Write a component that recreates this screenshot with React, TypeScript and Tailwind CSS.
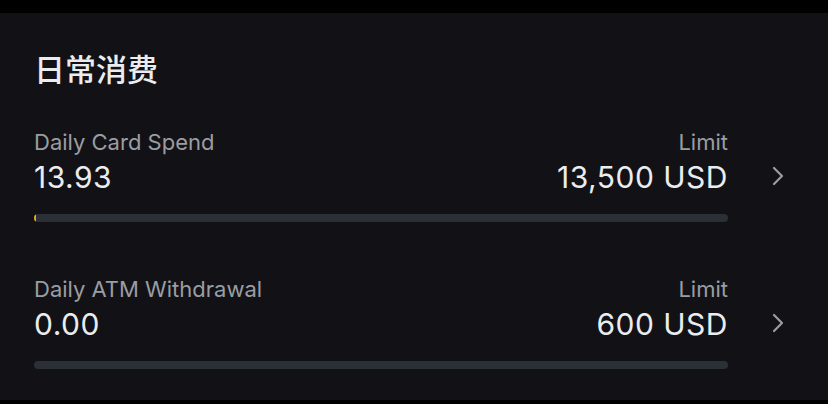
import React from "react";

const LIMITS = [
  { id: 1, label: "Daily Card Spend", used: 13.93, usedText: "13.93", limit: 13500, limitText: "13,500 USD" },
  { id: 2, label: "Daily ATM Withdrawal", used: 0, usedText: "0.00", limit: 600, limitText: "600 USD" },
];

function Chevron() {
  return (
    <svg width="12" height="20" viewBox="0 0 12 20" fill="none" className="text-[#9a9da3]">
      <path d="M2 2l8 8-8 8" stroke="currentColor" strokeWidth="2.2" strokeLinecap="round" strokeLinejoin="round" />
    </svg>
  );
}

export default function App() {
  return (
    <div
      className="w-[828px] h-[404px] bg-black pt-[13px] pb-[4px]"
      style={{ fontFamily: 'Inter, "Noto Sans CJK SC", sans-serif' }}
    >
      <div className="h-full bg-[#121216] pl-[34px] pr-[44px] pt-[39px]">
        {/* Title */}
        <h1 className="text-[31px] leading-[36px] font-medium text-[#eaecef]">日常消费</h1>

        {/* Limit rows */}
        <div className="mt-[41px] flex flex-col gap-[54px]">
          {LIMITS.map((item) => {
            const pct = Math.max((item.used / item.limit) * 100, item.used > 0 ? 0.3 : 0);
            return (
              <div key={item.id} className="flex items-start">
                <div className="flex-1">
                  <div className="flex justify-between text-[22px] leading-[26px] text-[#9a9da3]">
                    <span>{item.label}</span>
                    <span>Limit</span>
                  </div>
                  <div className="mt-[5px] flex justify-between text-[30px] leading-[34px] tracking-[0.5px] text-[#eaecef]">
                    <span>{item.usedText}</span>
                    <span>{item.limitText}</span>
                  </div>
                  <div className="mt-[20px] h-[8px] rounded-full bg-[#2b2f36] overflow-hidden">
                    <div className="h-full bg-[#f0a90b] rounded-full" style={{ width: `${pct}%` }} />
                  </div>
                </div>
                <div className="ml-[44px] mt-[37px]">
                  <Chevron />
                </div>
              </div>
            );
          })}
        </div>
      </div>
    </div>
  );
}
